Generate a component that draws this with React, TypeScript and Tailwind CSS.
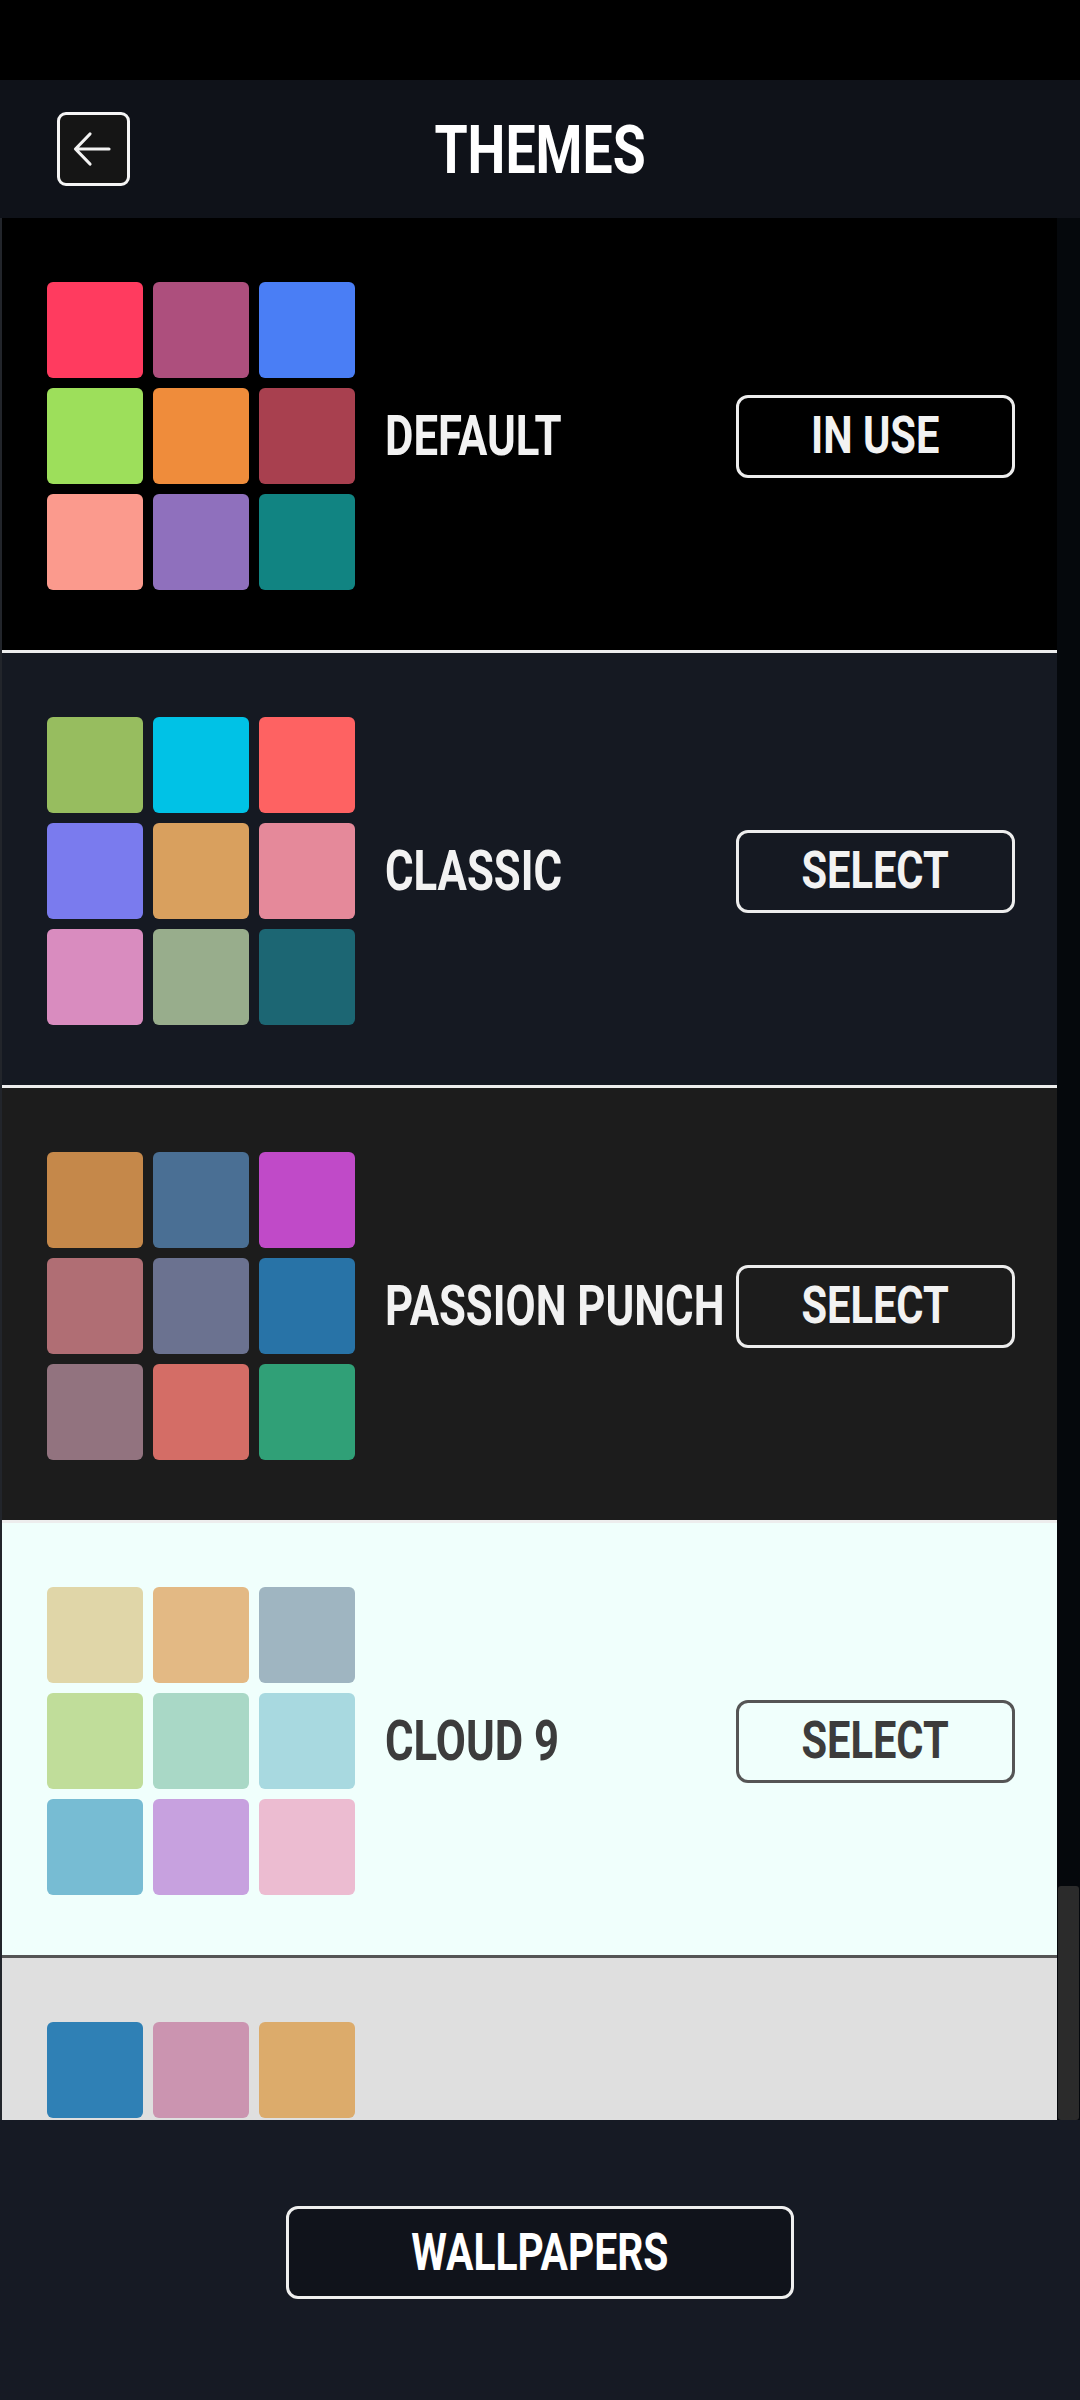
import { ReactNode } from "react";

type Theme = {
  name: string;
  bg: string;
  text: string;
  border: string;
  action: string;
  swatches: string[];
};

const THEMES: Theme[] = [
  {
    name: "DEFAULT",
    bg: "bg-black",
    text: "text-[#f2f2f2]",
    border: "border-[#ededed]",
    action: "IN USE",
    swatches: [
      "bg-[#ff3b5f]", "bg-[#ad4f7d]", "bg-[#4a7ef5]",
      "bg-[#9ddf5b]", "bg-[#ef8c3b]", "bg-[#a8404f]",
      "bg-[#fb9a8d]", "bg-[#8f70bd]", "bg-[#118482]",
    ],
  },
  {
    name: "CLASSIC",
    bg: "bg-[#151922]",
    text: "text-[#f2f2f2]",
    border: "border-[#ededed]",
    action: "SELECT",
    swatches: [
      "bg-[#97bd5f]", "bg-[#00c2e6]", "bg-[#fe6262]",
      "bg-[#7a7bee]", "bg-[#d9a05e]", "bg-[#e5899a]",
      "bg-[#d98cbf]", "bg-[#98ad8c]", "bg-[#1c6673]",
    ],
  },
  {
    name: "PASSION PUNCH",
    bg: "bg-[#1c1c1c]",
    text: "text-[#f2f2f2]",
    border: "border-[#ededed]",
    action: "SELECT",
    swatches: [
      "bg-[#c5884a]", "bg-[#4a6f94]", "bg-[#c04ac8]",
      "bg-[#b06e74]", "bg-[#6b7290]", "bg-[#2873a7]",
      "bg-[#92737f]", "bg-[#d46d66]", "bg-[#30a077]",
    ],
  },
  {
    name: "CLOUD 9",
    bg: "bg-[#f0fffc]",
    text: "text-[#3c3c3c]",
    border: "border-[#555555]",
    action: "SELECT",
    swatches: [
      "bg-[#e0d6a8]", "bg-[#e3b984]", "bg-[#9fb5c1]",
      "bg-[#c0dd9a]", "bg-[#a9d8c6]", "bg-[#a8d9e0]",
      "bg-[#77bcd3]", "bg-[#c7a1df]", "bg-[#ecbcd1]",
    ],
  },
];

// last row is cut off by the list, only its top swatches show
const PARTIAL = ["bg-[#2f80b5]", "bg-[#cb94b0]", "bg-[#dcab6b]"];

function Squeezed({ children, className = "scale-x-[0.8] origin-center" }: { children: ReactNode; className?: string }) {
  return <span className={`inline-block whitespace-nowrap ${className}`}>{children}</span>;
}

function Swatches({ colors }: { colors: string[] }) {
  return (
    <div className="grid grid-cols-[repeat(3,96px)] gap-[10px] shrink-0">
      {colors.map((c, i) => (
        <div key={i} className={`h-[96px] w-[96px] rounded-[6px] ${c}`} />
      ))}
    </div>
  );
}

function ThemeRow({ theme }: { theme: Theme }) {
  return (
    <div className={`h-[435px] shrink-0 border-b-[3px] ${theme.border} ${theme.bg} pl-[45px] pr-[42px] pt-[64px] pb-[60px] flex items-center`}>
      <Swatches colors={theme.swatches} />
      <div className={`ml-[30px] min-w-0 flex-1 text-[56px] font-bold leading-none ${theme.text}`}>
        <Squeezed className="scale-x-[0.78] origin-left">{theme.name}</Squeezed>
      </div>
      <button
        className={`h-[83px] w-[279px] shrink-0 rounded-[12px] border-[3px] ${theme.border} ${theme.text} text-[52px] font-bold leading-none flex items-center justify-center`}
      >
        <Squeezed>{theme.action}</Squeezed>
      </button>
    </div>
  );
}

export default function App() {
  return (
    <div className="h-[2400px] w-[1080px] flex flex-col bg-black font-[family-name:Roboto,_sans-serif]">
      <div className="h-[80px] shrink-0 bg-black" />

      <header className="h-[138px] shrink-0 bg-[#0f1219] grid grid-cols-[1fr_auto_1fr] items-center px-[57px]">
        <button className="h-[74px] w-[73px] rounded-[9px] border-[3px] border-[#f5f5f5] bg-[#151515] flex items-center justify-center">
          <svg width="40" height="36" viewBox="0 0 40 36" fill="none" className="-ml-[3px]">
            <path d="M37 18H4M18 3L3.5 18L18 33" stroke="#f2f2f2" strokeWidth="3.2" strokeLinecap="round" strokeLinejoin="round" />
          </svg>
        </button>
        <h1 className="text-[67px] font-bold leading-none text-white pt-[2px]">
          <Squeezed>THEMES</Squeezed>
        </h1>
        <div />
      </header>

      <div className="h-[1902px] shrink-0 flex overflow-hidden">
        <div className="w-[1057px] shrink-0 flex flex-col overflow-hidden border-l-2 border-[#22252b]">
          {THEMES.map((t) => (
            <ThemeRow key={t.name} theme={t} />
          ))}
          <div className="h-[435px] shrink-0 bg-[#dfdfdf] pl-[45px] pt-[64px]">
            <Swatches colors={PARTIAL} />
          </div>
        </div>
        <div className="flex-1 flex flex-col bg-[#05080c]">
          <div className="flex-1" />
          <div className="h-[234px] mx-[1px] rounded-[3px] bg-[#2b2b2b]" />
        </div>
      </div>

      <div className="flex-1 bg-[#161a24] flex items-start justify-center pt-[86px]">
        <button className="h-[93px] w-[508px] rounded-[12px] border-[3px] border-[#efefef] bg-[#10131b] text-white text-[51px] font-bold leading-none flex items-center justify-center">
          <Squeezed>WALLPAPERS</Squeezed>
        </button>
      </div>
    </div>
  );
}
